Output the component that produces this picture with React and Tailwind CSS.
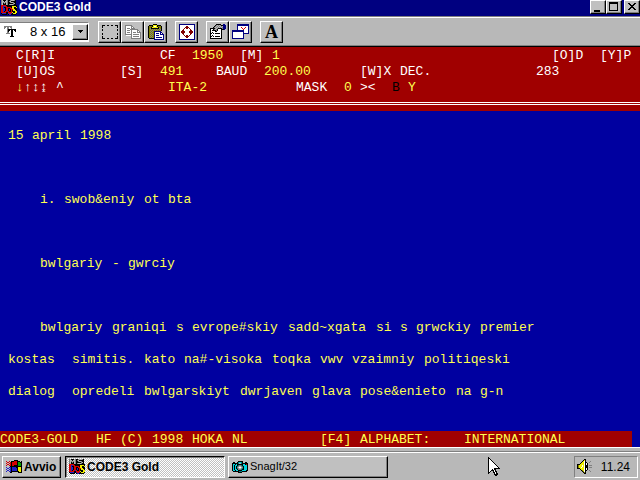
import React from 'react';
import clsx from 'clsx';

// Bevels of the classic window controls
const RAISED = 'border border-t-white border-l-white border-r-black border-b-black shadow-[inset_-1px_-1px_0_#808080]';
const PRESSED = 'border border-t-black border-l-black border-r-white border-b-white shadow-[inset_1px_1px_0_#808080]';

const INK = {
  k: '#000000', w: '#ffffff', g: '#b8b8b8', d: '#808080', r: '#d80000', m: '#800000',
  b: '#2020c8', n: '#000080', y: '#f0f000', o: '#808000', e: '#00a000', c: '#00d8e0', t: '#008080',
};

// Small bitmap icon: one letter of a row is one pixel, a dot is transparent
const Bitmap = ({ rows, className }) => (
  <svg
    width={rows[0].length}
    height={rows.length}
    viewBox={`0 0 ${rows[0].length} ${rows.length}`}
    shapeRendering="crispEdges"
    className={clsx('shrink-0', className)}
    aria-hidden="true"
  >
    {rows.flatMap((row, y) =>
      [...row].map((ch, x) => (INK[ch] ? <rect key={`${x}-${y}`} x={x} y={y} width="1" height="1" fill={INK[ch]} /> : null))
    )}
  </svg>
);

const DOS_ICON = [
  'dgkkkgdkkdgggdk.',
  'dggkggdkdgkkkkk.',
  'dgdgdgdkkdggdkk.',
  'dgkdkgdkkkkkdgk.',
  'dgkkkgdkdgggdkk.',
  'rrrrrkkkkkkkkkkk',
  'rrbbrrkkkkkyyyyk',
  'rrbkkrrrrrkyykky',
  'rrbbkrrkkrryykkk',
  'rrbbkrrkbkrryykk',
  'rrbbkrrkbkrkyyyk',
  'rrbkrrbrkkrkkkyy',
  'rrrrrkkrrrrykkyy',
  'kbbbbkkbrrbkyyyk',
  '.kkkkk.kbbkkkkk.',
];

const START_ICON = [
  '........kkkk....',
  'r..r.kkkrrrkkk.k',
  '.rr.rkrrrrrkeekk',
  'r..rrkrrrrrkeeek',
  '.rr.rkrrrrrkeeek',
  'r..rrkrrkkkkeeek',
  '....kkkkkkkkkkkk',
  'b..bbkbbbbkkyyyk',
  '.bb.bkbbbbbkyyyk',
  'b..bbkbbbbbkyyyk',
  '.bb.bkbbbbbkyyyk',
  'b..bbkkkkkkkkyyk',
  '....kk......kkkk',
];

const CAMERA_ICON = [
  '......kkkkk.....',
  '.kk..ktcctk..kk.',
  'kkkkkktggtkkkkkk',
  'kcckckkkkkkcckrk',
  'kckccktddtkcccck',
  'kckcktdggdtkccck',
  'kckckdgwwgdkccck',
  'kckcktdggdtkccck',
  'kckcckdddtkkccck',
  'kcckcckkkkcccckk',
  '.kkkkkktttkkkkk.',
  '......kkkk......',
];

const SPEAKER_ICON = [
  '.......kk.......',
  '......kyk.......',
  '.....kywk....d..',
  '....kyywkk..d...',
  '...kyyywkwk.....',
  'kkkyyyywkwk.....',
  'koyyywywkkk.ddd.',
  'koyyywywkkk.....',
  'koyywyywkkk.ddd.',
  'kkkyyyywkwk.....',
  '...kyyywkwk.....',
  '....koywkk..d...',
  '.....kowk....d..',
  '......kok.......',
  '.......kk.......',
];

const PASTE_ICON = [
  '.....kkkk.......',
  '.kkkkyyyykkkk...',
  'koookywwykoook..',
  'kookyyyyyykook..',
  'kodkkkkkkkkdok..',
  'kododododododk..',
  'koodododododok..',
  'kododonnnnnnn...',
  'koodoonwwwwwnn..',
  'kododonwnnnwnwn.',
  'koodoonwwwwwnnnn',
  'kododonwnnnwwwwn',
  'koodoonwwwwwwwwn',
  'kododonwnnnnnnwn',
  '.kkkkknwwwwwwwwn',
  '......nnnnnnnnnn',
];

const FULLSCREEN_ICON = [
  'nnnnnnnnnnnnnnnn',
  'nwwwwwwwwwwwwwwn',
  'nwwwwwwmmwwwwwwn',
  'nwwwwwmmmmwwwwwn',
  'nwwwwmwmmwmwwwwn',
  'nwwwmwwwwwwmwwwn',
  'nwwmmwwwwwwmmwwn',
  'nwmmmmwwwwmmmmwn',
  'nwmmmmwwwwmmmmwn',
  'nwwmmwwwwwwmmwwn',
  'nwwwmwwwwwwmwwwn',
  'nwwwwmwmmwmwwwwn',
  'nwwwwwmmmmwwwwwn',
  'nwwwwwwmmwwwwwwn',
  'nwwwwwwwwwwwwwwn',
  'nnnnnnnnnnnnnnnn',
];

const PROPERTIES_ICON = [
  '......kkkkk..nn.',
  '.....kdgdgdkknnn',
  '....kdgdgdgdgnnn',
  '...kdgdgdgdgdnnn',
  'kkkkkdgdkkkkdnnn',
  'kwwkdgdkwwwkkkn.',
  'kwkkkkdkwwwk....',
  'kwwwwkkwwwwk....',
  'kwkwwwwwwwwk....',
  'kkwkwkkkkkwk....',
  'kwwwwwwwwwwk....',
  'kwkwwwwwwwwk....',
  'kkwkwkkkkkwk....',
  'kwwwwwwwwwwk....',
  'kkkkkkkkkkkk....',
];

const WINDOWS_ICON = [
  '.....nnnnnnnnnnnn',
  '.....nnnnnnnnnnnn',
  '.....nwwwwwwwwwwn',
  '.....nwwwrwwwrwwn',
  '.....nwwwwrwrwwwn',
  '.....nwwwwwrwwwwn',
  'nnnnnnnnnnnnwwwwn',
  'nnnnnnnnnnnnwwwwn',
  'nwwwwwwwwwwnwwwwn',
  'nwwwwwwwwwwnnnnnn',
  'nwwwwwwwwwwn.....',
  'nwwwwwwwwwwn.....',
  'nwwwwwwwwwwn.....',
  'nwwwwwwwwwwn.....',
  'nnnnnnnnnnnn.....',
];

const COPY_ICON = [
  'ddddddd.........',
  'dwwwwwdd........',
  'dwwwwwdwd.......',
  'dwdddwdddd......',
  'dwwwwdddddddd...',
  'dwdddwdwwwwwdd..',
  'dwwwwwdwwwwwdwd.',
  'dwdddwdwdddwdddd',
  'dwwwwwdwwwwwwwwd',
  'dddddddwddddddwd',
  '.wwwwwdwwwwwwwwd',
  '......dwddddddwd',
  '......dwwwwwwwwd',
  '......dddddddddd',
];

const TRUETYPE_ICON = [
  'dddddddd....',
  'dd.dd.dd....',
  'd..dd..d....',
  '...dkkkkkkkk',
  '...dkk.kk.kk',
  '...dk..kk..k',
  '...dd..kk...',
  '..dddd.kk...',
  '.......kk...',
  '.......kk...',
  '......kkkk..',
];

const MarqueeIcon = () => (
  <svg width="16" height="14" viewBox="0 0 16 14" shapeRendering="crispEdges" aria-hidden="true">
    <path d="M0 .5H3M5 .5H7M9 .5H11M13 .5H16M0 13.5H3M5 13.5H7M9 13.5H11M13 13.5H16" stroke="#000" />
    <path d="M.5 0V3M.5 4V6M.5 8V10M.5 11V14M15.5 0V3M15.5 4V6M15.5 8V10M15.5 11V14" stroke="#000" />
  </svg>
);

const TOOL_GROUPS = [
  [
    { label: 'Mark', icon: <MarqueeIcon /> },
    { label: 'Copy', icon: <Bitmap rows={COPY_ICON} /> },
    { label: 'Paste', icon: <Bitmap rows={PASTE_ICON} /> },
  ],
  [{ label: 'Full screen', icon: <Bitmap rows={FULLSCREEN_ICON} /> }],
  [
    { label: 'Properties', icon: <Bitmap rows={PROPERTIES_ICON} /> },
    { label: 'Background', icon: <Bitmap rows={WINDOWS_ICON} /> },
  ],
  [{ label: 'Font', icon: <span className="font-['Liberation_Serif',serif] text-[18px] leading-5 font-bold">A</span> }],
];

// Each run is [column, text, tone]; the screen is 80 columns wide
const HEADER = [
  [[2, 'C[R]I', 'w'], [20, 'CF', 'w'], [24, '1950'], [30, '[M]', 'w'], [34, '1'], [69, '[O]D', 'w'], [75, '[Y]P', 'w']],
  [[2, '[U]OS', 'w'], [15, '[S]', 'w'], [20, '491'], [27, 'BAUD', 'w'], [33, '200.00'], [45, '[W]X', 'w'], [50, 'DEC.', 'w'], [67, '283', 'w']],
  [[2, '↓'], [3, '↑', 'w'], [4, '↕', 'w'], [5, '↨', 'w'], [7, '^', 'w'], [21, 'ITA-2'], [37, 'MASK', 'w'], [43, '0'], [45, '><', 'w'], [49, 'B', 'k'], [51, 'Y']],
];

const MESSAGE = [
  '',
  ' 15 april 1998',
  '', '', '',
  '     i. swob&eniy ot bta',
  '', '', '',
  '     bwlgariy - gwrciy',
  '', '', '',
  '     bwlgariy graniqi s evrope#skiy sadd~xgata si s grwckiy premier',
  '',
  ' kostas  simitis. kato na#-visoka toqka vwv vzaimniy politiqeski',
  '',
  ' dialog  opredeli bwlgarskiyt dwrjaven glava pose&enieto na g-n',
  '', '',
];

const STATUS = 'CODE3-GOLD  HF (C) 1998 HOKA NL         [F4] ALPHABET:    INTERNATIONAL';

const TONES = { w: 'text-white', k: 'text-black' };

const toRuns = (line) => [...line.matchAll(/\S+/g)].map((m) => [m.index, m[0]]);

const Row = ({ runs }) => (
  <div className="grid h-4 grid-cols-[repeat(80,minmax(0,1fr))]">
    {runs.map(([col, text, tone]) => (
      <span
        key={col}
        className={clsx('row-start-1 whitespace-pre', TONES[tone])}
        style={{ gridColumnStart: col + 1 }}
      >
        {text}
      </span>
    ))}
  </div>
);

const TitleButton = ({ label, children }) => (
  <button type="button" aria-label={label} className={clsx('flex h-[14px] w-4 items-center justify-center bg-[#c0c0c0]', RAISED)}>
    <svg width="10" height="10" viewBox="0 0 10 10" shapeRendering="crispEdges" fill="none" stroke="#000">
      {children}
    </svg>
  </button>
);

const TitleBar = () => (
  <header className="flex h-4 items-start bg-[#000080] text-white">
    <Bitmap rows={DOS_ICON} className="ml-px" />
    <h1 className="ml-0.5 flex-1 text-[12px] leading-[14px] font-bold">CODE3 Gold</h1>
    <TitleButton label="Minimize">
      <path d="M1 9H7" strokeWidth="2" />
    </TitleButton>
    <TitleButton label="Maximize">
      <path d="M0 1H9" strokeWidth="2" />
      <path d="M.5 1V8.5H8.5V1" />
    </TitleButton>
    <span className="w-0.5" />
    <TitleButton label="Close">
      <path d="M1 1.5h2M7 1.5h2M2 2.5h2M6 2.5h2M3 3.5h4M4 4.5h2M3 5.5h4M2 6.5h2M6 6.5h2M1 7.5h2M7 7.5h2" />
    </TitleButton>
  </header>
);

const Toolbar = () => (
  <div className="border-t border-[#808080] bg-[#b8b8b8]">
    <div className="flex h-[29px] items-center gap-2 border-t border-b border-t-white border-b-[#808080]">
      <div className="relative mr-px flex h-5 w-[89px] items-center border-t border-r border-b border-t-[#808080] border-r-white border-b-white bg-white">
        <Bitmap rows={TRUETYPE_ICON} className="ml-1" />
        <select
          aria-label="Font size"
          className="absolute inset-0 appearance-none bg-transparent pl-[30px] text-[13px] leading-4 outline-none"
          defaultValue="8x16"
        >
          <option value="8x16">8 x 16</option>
        </select>
        <span className={clsx('pointer-events-none absolute top-px right-0 flex h-4 w-4 items-center justify-center bg-[#c0c0c0]', RAISED)}>
          <svg width="5" height="3" viewBox="0 0 5 3" shapeRendering="crispEdges">
            <path d="M0 0H5V1H4V2H3V3H2V2H1V1H0Z" />
          </svg>
        </span>
      </div>
      {TOOL_GROUPS.map((group) => (
        <div key={group[0].label} className="flex">
          {group.map(({ label, icon }) => (
            <button
              key={label}
              type="button"
              aria-label={label}
              className={clsx('flex h-[22px] w-[23px] items-center justify-center bg-[#c0c0c0]', RAISED)}
            >
              {icon}
            </button>
          ))}
        </div>
      ))}
    </div>
  </div>
);

const Taskbar = () => (
  <footer className="relative border-t border-white bg-[#b8b8b8] pt-[3px]">
    <div className="flex h-[29px] items-center gap-[3px] border-t border-[#808080] px-0.5 pt-px shadow-[inset_0_2px_0_-1px_#ffffff]">
      <button type="button" className={clsx('mr-px flex h-[22px] w-[59px] items-center gap-0.5 bg-[#c0c0c0] pl-[3px] text-[12px] font-bold', RAISED)}>
        <Bitmap rows={START_ICON} />
        Avvio
      </button>
      <button
        type="button"
        className={clsx(
          'flex h-[22px] w-40 items-center gap-0.5 bg-[repeating-conic-gradient(#ffffff_0_25%,#c0c0c0_0_50%)] bg-[length:2px_2px] pl-[3px] text-[12px] font-bold',
          PRESSED
        )}
      >
        <Bitmap rows={DOS_ICON} />
        CODE3 Gold
      </button>
      <button type="button" className={clsx('flex h-[22px] w-40 items-center gap-0.5 bg-[#c0c0c0] pl-[3px] text-[11px]', RAISED)}>
        <Bitmap rows={CAMERA_ICON} />
        SnagIt/32
      </button>
      <div className="ml-auto flex h-[22px] items-center gap-2 border border-t-[#808080] border-r-white border-b-white border-l-[#808080] pr-[7px] pl-0.5 text-[12px]">
        <Bitmap rows={SPEAKER_ICON} />
        <time>11.24</time>
      </div>
    </div>
    {/* mouse pointer */}
    <svg className="pointer-events-none absolute top-[9px] left-[488px]" width="12" height="20" viewBox="0 0 12 20" shapeRendering="crispEdges" aria-hidden="true">
      <path d="M.5 .5V16.5L4.5 12.5L7.5 18.5L9.5 17.5L6.5 11.5H11.5Z" fill="#fff" stroke="#000" />
    </svg>
  </footer>
);

const App = () => (
  <div className="flex min-h-screen flex-col bg-[#0000a0] font-['Liberation_Sans',Arial,sans-serif] text-black">
    <TitleBar />
    <Toolbar />
    <main className="flex flex-1 flex-col font-['Liberation_Mono','Courier_New',monospace] text-[13px] leading-[18px] text-[#ffff50]">
      <section className="border-t border-black bg-[#a00000]">
        {HEADER.map((runs, i) => (
          <Row key={i} runs={runs} />
        ))}
        <div className="flex h-4 flex-col pt-[7px]">
          <hr className="h-[3px] border-t border-b border-white" />
        </div>
      </section>
      <section className="flex-1">
        {MESSAGE.map((line, i) => (
          <Row key={i} runs={toRuns(line)} />
        ))}
      </section>
      <div className="bg-[linear-gradient(to_right,#a00000_98.75%,#0000a0_98.75%)]">
        <Row runs={toRuns(STATUS)} />
      </div>
    </main>
    <Taskbar />
  </div>
);

export default App;
